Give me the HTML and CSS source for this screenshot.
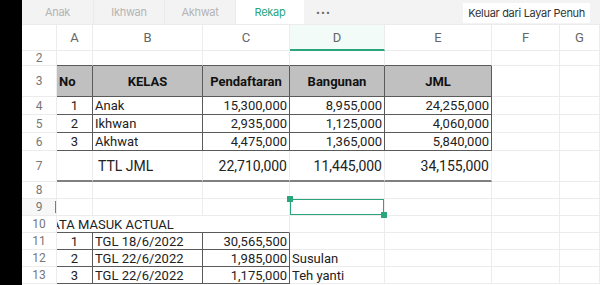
FILE: index.html
```html
<!DOCTYPE html>
<html lang="id">
<head>
    <meta charset="UTF-8">
    <meta name="viewport" content="width=device-width, initial-scale=1.0">
    <title>Rekap</title>
    <link rel="stylesheet" href="styles.css">
</head>
<body>
    <div class="side"></div>
    <div class="main">
        <div class="tabbar">
            <div class="tab">Anak</div>
            <div class="tab">Ikhwan</div>
            <div class="tab">Akhwat</div>
            <div class="tab active">Rekap</div>
            <div class="more">•••</div>
            <div class="exit">Keluar dari Layar Penuh</div>
        </div>

        <div class="sheet">
            <div class="row colhead">
                <div class="rn"></div>
                <div class="c">A</div>
                <div class="c">B</div>
                <div class="c">C</div>
                <div class="c cur">D</div>
                <div class="c">E</div>
                <div class="c">F</div>
                <div class="c">G</div>
            </div>

            <div class="row r2">
                <div class="rn">2</div>
                <div class="c tb"></div><div class="c tb"></div><div class="c tb"></div>
                <div class="c tb"></div><div class="c tb"></div><div class="c"></div><div class="c"></div>
            </div>

            <div class="row r3">
                <div class="rn">3</div>
                <div class="c t th left">No</div>
                <div class="c t th">KELAS</div>
                <div class="c t th">Pendaftaran</div>
                <div class="c t th">Bangunan</div>
                <div class="c t th">JML</div>
                <div class="c"></div><div class="c"></div>
            </div>

            <div class="row rd">
                <div class="rn">4</div>
                <div class="c t mid">1</div>
                <div class="c t">Anak</div>
                <div class="c t num">15,300,000</div>
                <div class="c t num">8,955,000</div>
                <div class="c t num">24,255,000</div>
                <div class="c"></div><div class="c"></div>
            </div>
            <div class="row rd">
                <div class="rn">5</div>
                <div class="c t mid">2</div>
                <div class="c t">Ikhwan</div>
                <div class="c t num">2,935,000</div>
                <div class="c t num">1,125,000</div>
                <div class="c t num">4,060,000</div>
                <div class="c"></div><div class="c"></div>
            </div>
            <div class="row rd">
                <div class="rn">6</div>
                <div class="c t mid">3</div>
                <div class="c t">Akhwat</div>
                <div class="c t num">4,475,000</div>
                <div class="c t num">1,365,000</div>
                <div class="c t num">5,840,000</div>
                <div class="c"></div><div class="c"></div>
            </div>

            <div class="row r7">
                <div class="rn">7</div>
                <div class="c tot"></div>
                <div class="c tot lbl">TTL JML</div>
                <div class="c tot num">22,710,000</div>
                <div class="c tot num">11,445,000</div>
                <div class="c tot num">34,155,000</div>
                <div class="c"></div><div class="c"></div>
            </div>

            <div class="row rs">
                <div class="rn">8</div>
                <div class="c"></div><div class="c"></div><div class="c"></div><div class="c"></div>
                <div class="c"></div><div class="c"></div><div class="c"></div>
            </div>
            <div class="row rs">
                <div class="rn currow">9</div>
                <div class="c"></div><div class="c"></div><div class="c"></div><div class="c sel"></div>
                <div class="c"></div><div class="c"></div><div class="c"></div>
            </div>
            <div class="row rs">
                <div class="rn">10</div>
                <div class="c span3 tb"><span class="clip">DATA MASUK ACTUAL</span></div>
                <div class="c"></div><div class="c"></div><div class="c"></div><div class="c"></div>
            </div>
            <div class="row rs">
                <div class="rn">11</div>
                <div class="c t mid">1</div>
                <div class="c t">TGL 18/6/2022</div>
                <div class="c t num">30,565,500</div>
                <div class="c"></div><div class="c"></div><div class="c"></div><div class="c"></div>
            </div>
            <div class="row rs">
                <div class="rn">12</div>
                <div class="c t mid">2</div>
                <div class="c t">TGL 22/6/2022</div>
                <div class="c t num">1,985,000</div>
                <div class="c">Susulan</div><div class="c"></div><div class="c"></div><div class="c"></div>
            </div>
            <div class="row rs">
                <div class="rn">13</div>
                <div class="c t mid">3</div>
                <div class="c t">TGL 22/6/2022</div>
                <div class="c t num">1,175,000</div>
                <div class="c">Teh yanti</div><div class="c"></div><div class="c"></div><div class="c"></div>
            </div>
        </div>
    </div>
</body>
</html>
```

FILE: styles.css
```css
/* Sheet view */
body {
    margin: 0;
    width: 600px;
    height: 285px;
    overflow: hidden;
    display: flex;
    background-color: #fff;
    font-family: Roboto, "Liberation Sans", sans-serif;
}

.side {
    width: 22px;
    flex: none;
    background-color: #000;
}

.main {
    flex: 1;
    display: flex;
    flex-direction: column;
    overflow: hidden;
}

/* Tabs */
.tabbar {
    height: 25px;
    flex: none;
    display: flex;
    align-items: stretch;
    background-color: #f3f3f3;
    border-bottom: 1px solid #ececec;
    box-sizing: border-box;
    font-family: Inter, "Noto Sans", sans-serif;
    font-size: 11px;
    letter-spacing: -0.3px;
}

.tab {
    width: 70px;
    display: flex;
    align-items: center;
    justify-content: center;
    color: #b4b4b4;
    border-right: 1px solid #ebebeb;
}

.tab:first-child {
    width: 71px;
}

.tab.active {
    width: 68px;
    background-color: #fff;
    color: #2ba57d;
    border-right: none;
}

.more {
    display: flex;
    align-items: center;
    margin-left: 12px;
    font-size: 7px;
    letter-spacing: 1px;
    color: #666;
}

.exit {
    margin: 3px 10px 1px auto;
    padding: 0 5px;
    display: flex;
    align-items: center;
    background-color: #fff;
    color: #333;
}

/* Grid */
.sheet {
    flex: 1;
}

.row {
    display: grid;
    grid-template-columns: 35px 36px 110px 87px 95px 107px 68px 40px;
    font-size: 13px;
    color: #222;
}

.rn, .c {
    box-sizing: border-box;
    border-right: 1px solid #ececec;
    border-bottom: 1px solid #ececec;
    display: flex;
    align-items: center;
    white-space: nowrap;
    overflow: hidden;
}

.rn {
    justify-content: center;
    color: #777;
    font-size: 12px;
}

.c {
    padding: 0 2px;
}

.colhead {
    height: 26px;
}

.colhead .c {
    justify-content: center;
    color: #666;
    font-size: 13px;
}

.colhead .cur {
    background-color: #f3fbf8;
    border-bottom: 2px solid #2ba57d;
}

.r2 { height: 15px; }
.r3 { height: 31px; }
.rd { height: 18px; }
.r7 { height: 31px; }
.rs { height: 17px; }

.t {
    border-right-color: #5a5a5a;
    border-bottom-color: #5a5a5a;
}

.tb {
    border-bottom-color: #5a5a5a;
}

.th {
    background-color: #c0c0c0;
    justify-content: center;
    font-weight: bold;
    color: #111;
}

.th.left {
    justify-content: flex-start;
}

.mid {
    justify-content: center;
}

.num {
    justify-content: flex-end;
}

.tot {
    border-bottom: 2px solid #808080;
    font-size: 14px;
}

.tot.lbl {
    padding-left: 5px;
}

.currow {
    position: relative;
    background-color: #f7f7f7;
}

.currow::after {
    content: "";
    position: absolute;
    right: -1px;
    top: 2px;
    bottom: 2px;
    width: 2px;
    background-color: #2ba57d;
}

.sel {
    position: relative;
    overflow: visible;
    box-shadow: inset 0 0 0 1px #2ba57d;
}

.sel::before,
.sel::after {
    content: "";
    position: absolute;
    width: 6px;
    height: 6px;
    background-color: #2ba57d;
}

.sel::before {
    left: -3px;
    top: -3px;
}

.sel::after {
    right: -3px;
    bottom: -3px;
}

.span3 {
    grid-column: span 3;
    padding: 0;
}

.clip {
    margin-left: -14px;
}
```
